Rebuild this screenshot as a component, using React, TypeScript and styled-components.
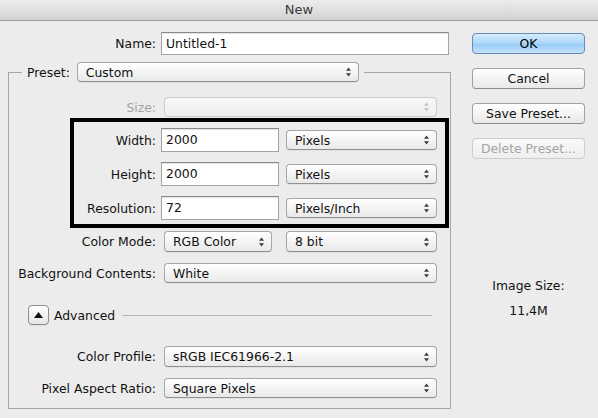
import React from "react";
import styled, { createGlobalStyle, css } from "styled-components";

const GlobalStyle = createGlobalStyle`
  html, body {
    margin: 0;
    padding: 0;
    background: #ececec;
  }
  body {
    font-family: "DejaVu Sans", "Liberation Sans", sans-serif;
    font-size: 12.4px;
    color: #111;
  }
`;

const Window = styled.div`
  width: 598px;
  height: 418px;
  background: #ececec;
  overflow: hidden;
`;

const TitleBar = styled.div`
  height: 20px;
  line-height: 20px;
  text-align: center;
  font-size: 13px;
  color: #3c3c3c;
  background: linear-gradient(#ececec, #d3d3d3);
  border-bottom: 1px solid #9c9c9c;
`;

const Body = styled.div`
  display: flex;
`;

const Main = styled.div`
  width: 443px;
  margin-left: 8px;
`;

interface RowProps {
  $label: number;
  $top?: number;
  $h?: number;
}

const FormRow = styled.div<RowProps>`
  display: grid;
  grid-template-columns: ${(p) => p.$label}px 1fr;
  column-gap: 5px;
  align-items: center;
  height: ${(p) => p.$h ?? 20}px;
  margin-top: ${(p) => p.$top ?? 0}px;
`;

const Label = styled.span<{ $disabled?: boolean }>`
  text-align: right;
  white-space: nowrap;
  color: ${(p) => (p.$disabled ? "#a3a3a3" : "#111")};
`;

const Controls = styled.div<{ $gap?: number }>`
  display: flex;
  align-items: center;
  gap: ${(p) => p.$gap ?? 7}px;
`;

const TextField = styled.div<{ $width?: number; $h?: number }>`
  box-sizing: border-box;
  width: ${(p) => (p.$width ? `${p.$width}px` : "auto")};
  height: ${(p) => p.$h ?? 24}px;
  line-height: ${(p) => (p.$h ?? 24) - 2}px;
  padding-left: 4px;
  background: #fff;
  border: 1px solid #a4a4a4;
  border-top-color: #8a8a8a;
  box-shadow: inset 0 1px 1px rgba(0, 0, 0, 0.12);
  white-space: nowrap;
`;

const NameRow = styled(FormRow)`
  margin-top: 11px;
  height: 23px;
  padding-right: 2px;
`;

const SelectBox = styled.div<{ $width?: number; $disabled?: boolean; $h?: number; $shift?: number }>`
  box-sizing: border-box;
  display: flex;
  align-items: center;
  justify-content: space-between;
  width: ${(p) => (p.$width ? `${p.$width}px` : "auto")};
  height: ${(p) => p.$h ?? 20}px;
  margin-left: ${(p) => p.$shift ?? 0}px;
  padding: 0 6px 0 8px;
  border-radius: 4px;
  white-space: nowrap;
  ${(p) =>
    p.$disabled
      ? css`
          background: linear-gradient(#f7f7f7, #efefef);
          border: 1px solid #cbcbcb;
          color: #a3a3a3;
        `
      : css`
          background: linear-gradient(#ffffff, #f3f3f3 55%, #e9e9e9);
          border: 1px solid #a6a6a6;
          border-bottom-color: #8f8f8f;
          box-shadow: 0 1px 0 rgba(0, 0, 0, 0.04);
          color: #111;
        `}
`;

const Arrows = ({ color }: { color: string }) => (
  <svg width="7" height="10" viewBox="0 0 7 10">
    <path d="M3.5 0.5 L6 3.8 L1 3.8 Z" fill={color} />
    <path d="M3.5 9.5 L6 6.2 L1 6.2 Z" fill={color} />
  </svg>
);

const Select = ({
  value,
  width,
  disabled,
  h,
  shift,
}: {
  value?: string;
  width?: number;
  disabled?: boolean;
  h?: number;
  shift?: number;
}) => (
  <SelectBox $width={width} $disabled={disabled} $h={h} $shift={shift}>
    <span>{value}</span>
    <Arrows color={disabled ? "#c2c2c2" : "#3a3a3a"} />
  </SelectBox>
);

const Group = styled.fieldset`
  margin: 0;
  margin-top: 7px;
  padding: 0 0 10px 0;
  border: 1px solid #a6a6a6;
  min-width: 0;
`;

const Legend = styled.legend`
  display: flex;
  align-items: center;
  gap: 7px;
  margin-left: 13px;
  padding: 0 5px;
`;

const Highlight = styled.div`
  margin: 1px 1px 0 61px;
  padding: 6px 8px 4px 0;
  border: 4px solid #000;
`;

const AdvancedRow = styled.div`
  display: flex;
  align-items: center;
  height: 20px;
  margin-top: 22px;
  padding-left: 19px;
  padding-right: 18px;
`;

const Disclosure = styled.div`
  box-sizing: border-box;
  width: 21px;
  height: 20px;
  display: flex;
  align-items: center;
  justify-content: center;
  border-radius: 4px;
  border: 1px solid #8c8c8c;
  background: linear-gradient(#ffffff, #e6e6e6);
  box-shadow: 0 1px 0 rgba(0, 0, 0, 0.05);
`;

const AdvancedText = styled.span`
  margin-left: 5px;
`;

const Rule = styled.div`
  flex: 1;
  height: 1px;
  margin-left: 7px;
  background: #b4b4b4;
`;

const Side = styled.div`
  display: flex;
  flex-direction: column;
  width: 113px;
  margin-left: 21px;
  padding-top: 12px;
  gap: 14px;
`;

const Button = styled.div<{ $primary?: boolean; $disabled?: boolean }>`
  box-sizing: border-box;
  height: 21px;
  line-height: 19px;
  text-align: center;
  border-radius: 4px;
  font-size: 12.4px;
  ${(p) =>
    p.$primary
      ? css`
          background: linear-gradient(#d4ebfd, #acd6f8 50%, #97ccf7 55%, #c4e4fc);
          border: 1px solid #6b8bb8;
          color: #000;
        `
      : p.$disabled
      ? css`
          background: linear-gradient(#f8f8f8, #efefef);
          border: 1px solid #cdcdcd;
          color: #a5a5a5;
        `
      : css`
          background: linear-gradient(#ffffff, #f3f3f3 55%, #e8e8e8);
          border: 1px solid #a2a2a2;
          border-bottom-color: #8c8c8c;
          color: #111;
        `}
`;

const ImageSize = styled.div`
  margin-top: 105px;
  display: flex;
  flex-direction: column;
  align-items: center;
  gap: 9px;
  line-height: 16px;
`;

export default function App() {
  return (
    <>
      <GlobalStyle />
      <Window>
        <TitleBar>New</TitleBar>
        <Body>
          <Main>
            <NameRow $label={148}>
              <Label>Name:</Label>
              <TextField $h={23}>Untitled-1</TextField>
            </NameRow>

            <Group>
              <Legend>
                <Label>Preset:</Label>
                <Select value="Custom" width={282} />
              </Legend>

              <FormRow $label={147} $top={15} style={{ paddingRight: 13 }}>
                <Label $disabled>Size:</Label>
                <Select disabled shift={3} />
              </FormRow>

              <Highlight>
                <FormRow $label={82} $h={24}>
                  <Label>Width:</Label>
                  <Controls>
                    <TextField $width={118}>2000</TextField>
                    <Select value="Pixels" width={151} />
                  </Controls>
                </FormRow>
                <FormRow $label={82} $h={24} $top={10}>
                  <Label>Height:</Label>
                  <Controls>
                    <TextField $width={118}>2000</TextField>
                    <Select value="Pixels" width={151} />
                  </Controls>
                </FormRow>
                <FormRow $label={82} $h={24} $top={10}>
                  <Label>Resolution:</Label>
                  <Controls>
                    <TextField $width={118}>72</TextField>
                    <Select value="Pixels/Inch" width={151} />
                  </Controls>
                </FormRow>
              </Highlight>

              <FormRow $label={147} $top={3} $h={21}>
                <Label>Color Mode:</Label>
                <Controls $gap={14}>
                  <Select value="RGB Color" width={108} h={21} shift={3} />
                  <Select value="8 bit" width={151} h={21} />
                </Controls>
              </FormRow>

              <FormRow $label={147} $top={11} style={{ paddingRight: 13 }}>
                <Label>Background Contents:</Label>
                <Select value="White" shift={3} />
              </FormRow>

              <AdvancedRow>
                <Disclosure>
                  <svg width="9" height="6" viewBox="0 0 9 6">
                    <path d="M4.5 0 L9 6 L0 6 Z" fill="#111" />
                  </svg>
                </Disclosure>
                <AdvancedText>Advanced</AdvancedText>
                <Rule />
              </AdvancedRow>

              <FormRow $label={147} $top={21} $h={21} style={{ paddingRight: 13 }}>
                <Label>Color Profile:</Label>
                <Select value="sRGB IEC61966-2.1" h={21} shift={3} />
              </FormRow>

              <FormRow $label={147} $top={11} style={{ paddingRight: 13 }}>
                <Label>Pixel Aspect Ratio:</Label>
                <Select value="Square Pixels" shift={3} />
              </FormRow>
            </Group>
          </Main>

          <Side>
            <Button $primary>OK</Button>
            <Button>Cancel</Button>
            <Button>Save Preset...</Button>
            <Button $disabled>Delete Preset...</Button>
            <ImageSize>
              <span>Image Size:</span>
              <span>11,4M</span>
            </ImageSize>
          </Side>
        </Body>
      </Window>
    </>
  );
}
